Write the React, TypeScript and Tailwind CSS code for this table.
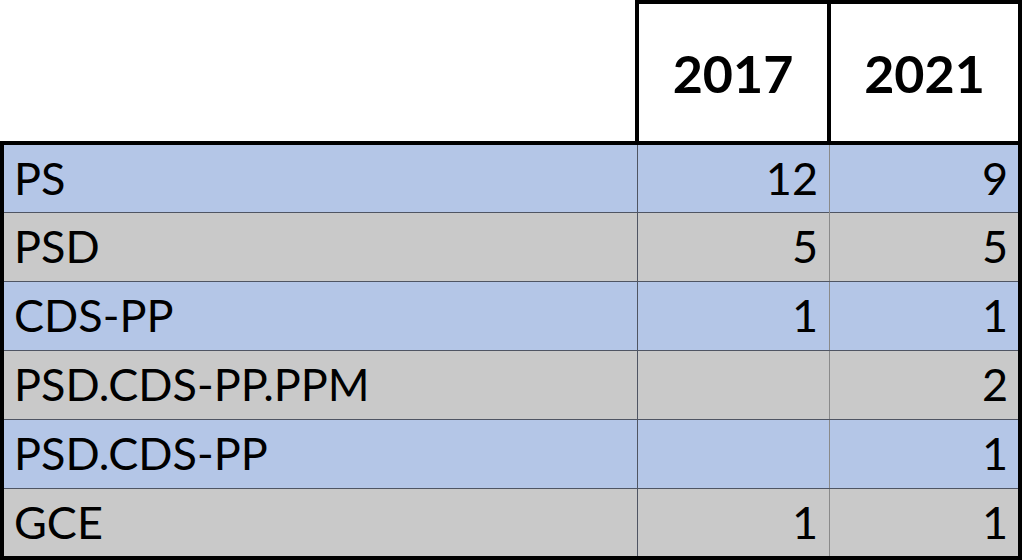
import * as React from 'react';

const rows = [
  { name: 'PS', a: '12', b: '9', bg: 'bg-[#b4c6e7]', h: 'h-[68px]' },
  { name: 'PSD', a: '5', b: '5', bg: 'bg-[#c9c9c9]', h: 'h-[69px]' },
  { name: 'CDS-PP', a: '1', b: '1', bg: 'bg-[#b4c6e7]', h: 'h-[69px]' },
  { name: 'PSD.CDS-PP.PPM', a: '', b: '2', bg: 'bg-[#c9c9c9]', h: 'h-[69px]' },
  { name: 'PSD.CDS-PP', a: '', b: '1', bg: 'bg-[#b4c6e7]', h: 'h-[69px]' },
  { name: 'GCE', a: '1', b: '1', bg: 'bg-[#c9c9c9]', h: 'flex-1' },
];

export default function App() {
  return (
    <main className="w-[1023px] h-[560px] bg-white font-['Lato','Liberation_Sans',sans-serif] text-black overflow-hidden">
      <div className="w-[1022px]">
        <section id="header" className="flex h-[141px]">
          <div className="w-[635px]" />
          <div className="flex w-[387px] border-t-4 border-x-4 border-black">
            <div className="w-[188px] flex items-center justify-center text-[52px] font-bold">2017</div>
            <div className="flex-1 border-l-4 border-black flex items-center justify-center text-[52px] font-bold">2021</div>
          </div>
        </section>
        <section id="table" className="flex flex-col h-[419px] border-4 border-black">
          {rows.map((r, i) => (
            <div
              key={r.name}
              className={`grid grid-cols-[634px_192px_188px] ${r.h} ${r.bg} ${i < rows.length - 1 ? 'border-b border-[#4f5563]' : ''}`}
            >
              <div className="border-r border-[#4f5563] flex items-center pl-[10px] text-[45px]">{r.name}</div>
              <div className="border-r border-[#8a8a8a] flex items-center justify-end pr-[11px] text-[45px]">{r.a}</div>
              <div className="flex items-center justify-end pr-[10px] text-[45px]">{r.b}</div>
            </div>
          ))}
        </section>
      </div>
    </main>
  );
}
